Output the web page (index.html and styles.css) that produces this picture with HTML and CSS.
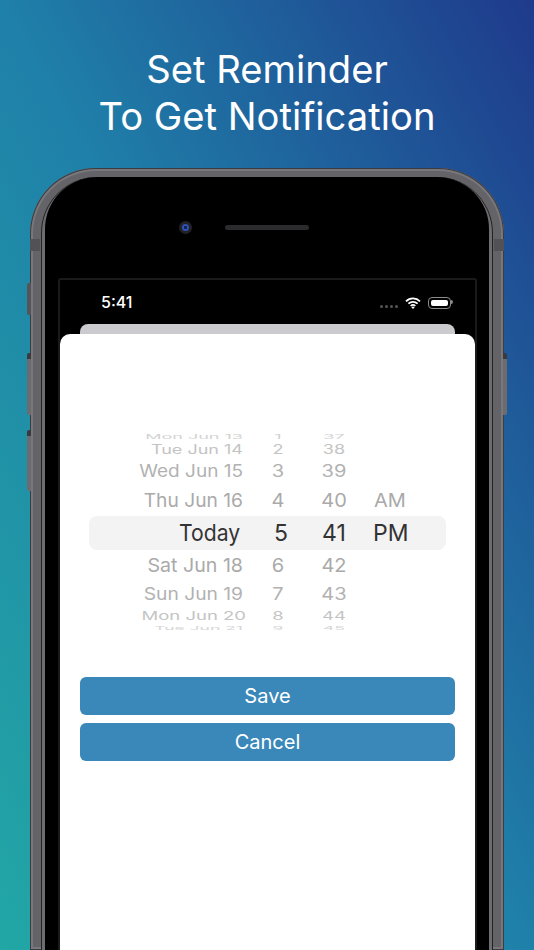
FILE: index.html
```html
<!DOCTYPE html>
<html lang="en">
  <head>
    <meta charset="UTF-8" />
    <meta name="viewport" content="width=device-width, initial-scale=1.0" />
    <title>Set Reminder</title>
    <link rel="stylesheet" href="styles.css">
  </head>
  <body>
    <h1 class="headline">Set Reminder<br />To Get Notification</h1>
    <div class="phone">
      <div class="side-btn mute"></div>
      <div class="side-btn vol-up"></div>
      <div class="side-btn vol-down"></div>
      <div class="side-btn power"></div>
      <div class="antenna left"></div>
      <div class="antenna right"></div>
      <div class="band">
        <div class="face">
          <div class="sensors">
            <div class="camera"></div>
            <div class="speaker"></div>
          </div>
          <div class="screen">
            <div class="status">
              <span class="time">5:41</span>
              <div class="status-icons">
                <div class="signal"><i></i><i></i><i></i><i></i></div>
                <svg class="wifi" viewBox="0 0 16 12" width="16" height="12">
                  <g fill="none" stroke="#fff" stroke-width="1.7">
                    <path d="M1 4.3a10 10 0 0 1 14 0" />
                    <path d="M3.4 6.7a6.6 6.6 0 0 1 9.2 0" />
                    <path d="M5.7 9a3.3 3.3 0 0 1 4.6 0" />
                  </g>
                  <path d="M8 12L6.4 10.3a2.2 2.2 0 0 1 3.2 0z" fill="#fff" />
                </svg>
                <div class="battery"><div class="charge"></div></div>
              </div>
            </div>
            <div class="card-behind"></div>
            <div class="sheet">
              <div class="picker">
                <div class="highlight"></div>
                <div class="row r1"><span>Mon Jun 13</span><span>1</span><span>37</span><span></span></div>
                <div class="row r2"><span>Tue Jun 14</span><span>2</span><span>38</span><span></span></div>
                <div class="row r3"><span>Wed Jun 15</span><span>3</span><span>39</span><span></span></div>
                <div class="row r4"><span>Thu Jun 16</span><span>4</span><span>40</span><span>AM</span></div>
                <div class="row r5"><span>Today</span><span>5</span><span>41</span><span>PM</span></div>
                <div class="row r6"><span>Sat Jun 18</span><span>6</span><span>42</span><span></span></div>
                <div class="row r7"><span>Sun Jun 19</span><span>7</span><span>43</span><span></span></div>
                <div class="row r8"><span>Mon Jun 20</span><span>8</span><span>44</span><span></span></div>
                <div class="row r9"><span>Tue Jun 21</span><span>9</span><span>45</span><span></span></div>
              </div>
              <button class="btn save">Save</button>
              <button class="btn">Cancel</button>
            </div>
          </div>
        </div>
      </div>
    </div>
  </body>
</html>
```

FILE: styles.css
```css
* {
  margin: 0;
  padding: 0;
  box-sizing: border-box;
}
html,
body {
  width: 534px;
  height: 950px;
  overflow: hidden;
}
body {
  font-family: Inter, "Liberation Sans", sans-serif;
  background: linear-gradient(to top right, #22a7a5, #1f80a9 50%, #1f3a8c);
}
.headline {
  padding-top: 46px;
  margin-bottom: 28px;
  font-size: 38.2px;
  font-weight: 400;
  line-height: 47px;
  text-align: center;
  color: #fff;
}

/* phone shell, cut off by the bottom of the window */
.phone {
  position: relative;
  width: 474px;
  height: 782px;
  margin-left: 30px;
  padding: 9px 11px 0;
  border-radius: 66px 66px 0 0;
  background: #636368;
  box-shadow: inset 0 0 0 1px #3c3c40, inset 0 0 0 3px #77777c;
}
.band {
  height: 100%;
  padding: 0 4px;
  border-radius: 56px 56px 0 0;
  background: #6c6c71;
  box-shadow: inset 1px 0 0 #222, inset -1px 0 0 #222;
}
.face {
  height: 100%;
  padding-top: 44px;
  border-radius: 52px 52px 0 0;
  background: #000;
}
.side-btn {
  position: absolute;
  left: -3px;
  width: 4px;
  border-radius: 2px 0 0 2px;
  background: #6b6b70;
  border-top: 6px solid #3a3a3e;
}
.mute {
  top: 115px;
  height: 32px;
  border-top: 0;
  background: #555559;
}
.vol-up {
  top: 185px;
  height: 62px;
}
.vol-down {
  top: 262px;
  height: 61px;
}
.power {
  top: 185px;
  left: auto;
  right: -3px;
  height: 62px;
  border-radius: 0 2px 2px 0;
}
.antenna {
  position: absolute;
  top: 71px;
  width: 10px;
  height: 12px;
  background: #515156;
}
.antenna.left {
  left: 0;
}
.antenna.right {
  right: 0;
}
.sensors {
  display: flex;
  align-items: center;
  gap: 34px;
  height: 12px;
  margin-left: 134px;
}
.camera {
  width: 13px;
  height: 13px;
  margin-right: -1px;
  border-radius: 50%;
  border: 3px solid #212127;
  background: radial-gradient(circle, #132050 0 1.3px, #2f52b5 2px 4px);
}
.speaker {
  width: 84px;
  height: 5px;
  border-radius: 3px;
  background: #2b2b2d;
}

/* screen */
.screen {
  height: 672px;
  margin: 45px 12px 0 13px;
  border: 2px solid #1a1a1a;
  border-bottom: 0;
  border-radius: 3px 3px 0 0;
}
.status {
  display: flex;
  justify-content: space-between;
  align-items: center;
  height: 44px;
  padding: 0 24px 0 41px;
  color: #fff;
}
.time {
  font-size: 16px;
  font-weight: 500;
}
.status-icons {
  display: flex;
  align-items: center;
  gap: 7px;
  margin-top: 1px;
}
.signal {
  display: flex;
  gap: 2px;
  margin-top: 8px;
}
.signal i {
  width: 3px;
  height: 3px;
  border-radius: 50%;
  background: #555;
}
.battery {
  position: relative;
  width: 23px;
  height: 12px;
  padding: 2px;
  border: 1px solid #8a8a8a;
  border-radius: 4px;
}
.battery::after {
  content: "";
  position: absolute;
  top: 2px;
  right: -3px;
  width: 2px;
  height: 4px;
  border-radius: 0 2px 2px 0;
  background: #8a8a8a;
}
.charge {
  height: 100%;
  border-radius: 2px;
  background: #fff;
}
.card-behind {
  height: 10px;
  margin: 0 20px;
  border-radius: 8px 8px 0 0;
  background: #cbcbcf;
}
.sheet {
  height: 616px;
  padding-top: 98px;
  border-radius: 10px 10px 0 0;
  background: #fff;
}

/* wheel picker */
.picker {
  position: relative;
  width: 357px;
  height: 198px;
  margin: 0 0 47px 29px;
  overflow: hidden;
}
.highlight {
  position: absolute;
  top: 84px;
  left: 0;
  right: 0;
  height: 34px;
  border-radius: 8px;
  background: #f3f3f3;
}
.row {
  position: relative;
  display: grid;
  grid-template-columns: 154px 70px 42px 1fr;
  grid-template-rows: 100%;
  align-items: center;
  overflow: hidden;
  font-size: 20px;
  color: #a9a9a9;
  white-space: nowrap;
}
.row span {
  text-align: center;
}
.row span:first-child {
  text-align: right;
  transform-origin: right center;
}
.row span:last-child {
  padding-left: 19px;
  text-align: left;
}
.r1 { height: 8px; font-size: 18px; color: #d2d2d2; }
.r2 { height: 18px; font-size: 18px; color: #c4c4c4; }
.r3 { height: 26px; color: #b2b2b2; }
.r4 { height: 32px; color: #aaa; }
.r5 { height: 34px; font-size: 23px; color: #333; }
.r6 { height: 30px; color: #aaa; }
.r7 { height: 28px; color: #b2b2b2; }
.r8 { height: 16px; font-size: 18.5px; color: #c4c4c4; }
.r9 { height: 6px; font-size: 17.5px; color: #d6d6d6; }
.r1 span { transform: scaleY(0.36); }
.r2 span { transform: scaleY(0.69); }
.r3 span { transform: scaleY(0.84); }
.r4 span { transform: scaleY(0.96); }
.r6 span { transform: scaleY(0.96); }
.r7 span { transform: scaleY(0.84); }
.r8 span { transform: scaleY(0.62); }
.r9 span { transform: translateY(1px) scaleY(0.3); }
.r3 span:first-child { transform: scale(0.95, 0.84); }
.r4 span:first-child { transform: scale(0.96, 0.96); }
.r5 span:first-child { transform: scaleX(0.92); padding-right: 3px; }
.r6 span:first-child { transform: scale(0.98, 0.96); }
.r7 span:first-child { transform: scale(0.96, 0.84); }
.r8 span:first-child { transform: translateX(3px) scaleY(0.62); }
.r5 span:nth-child(2) { padding-left: 6px; }
.r5 span:last-child { padding-left: 18px; }

.btn {
  display: block;
  width: 375px;
  height: 38px;
  margin: 0 20px 8px;
  border: 0;
  border-radius: 6px;
  font-family: inherit;
  font-size: 20px;
  color: #fff;
  background: #3a88b9;
}
```
